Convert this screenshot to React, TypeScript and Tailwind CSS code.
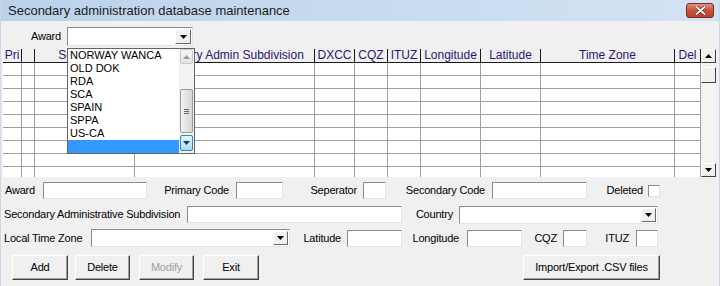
import React from 'react';

const columns = [
  { w: 'w-[19px]', label: 'Pri' },
  { w: 'w-[13px]', label: '' },
  { w: 'w-[100px]', label: 'Sec Code' },
  { w: 'w-[180px]', label: 'Secondary Admin Subdivision' },
  { w: 'w-[40px]', label: 'DXCC' },
  { w: 'w-[33px]', label: 'CQZ' },
  { w: 'w-[33px]', label: 'ITUZ' },
  { w: 'w-[60px]', label: 'Longitude' },
  { w: 'w-[60px]', label: 'Latitude' },
  { w: 'w-[134px]', label: 'Time Zone' },
  { w: 'w-[26px]', label: 'Del' },
];

const awards = ['NORWAY WANCA', 'OLD DOK', 'RDA', 'SCA', 'SPAIN', 'SPPA', 'US-CA', ''];

const DownTri = ({ color = '#000' }: { color?: string }) => (
  <svg width="7" height="4" viewBox="0 0 7 4">
    <path d="M0 0h7L3.5 4z" fill={color} />
  </svg>
);

const UpTri = ({ color = '#000' }: { color?: string }) => (
  <svg width="7" height="4" viewBox="0 0 7 4">
    <path d="M0 4h7L3.5 0z" fill={color} />
  </svg>
);

const Field = ({ className = '' }: { className?: string }) => (
  <div
    className={`h-[17px] shrink-0 bg-white border border-t-[#8c8c8c] border-l-[#8c8c8c] border-r-[#e3e3e3] border-b-[#e3e3e3] ${className}`}
  />
);

const Combo = ({ className = '' }: { className?: string }) => (
  <div
    className={`h-[18px] shrink-0 bg-white border border-t-[#8c8c8c] border-l-[#8c8c8c] border-r-[#e3e3e3] border-b-[#e3e3e3] flex justify-end p-px ${className}`}
  >
    <div className="w-[15px] h-full bg-[#f0f0f0] border border-t-white border-l-white border-r-[#696969] border-b-[#696969] flex items-center justify-center">
      <DownTri />
    </div>
  </div>
);

const Btn = ({ children, className = '', disabled = false }: { children: React.ReactNode; className?: string; disabled?: boolean }) => (
  <button
    className={`h-[25px] shrink-0 bg-[#f0f0f0] border border-t-white border-l-white border-r-[#404040] border-b-[#404040] shadow-[inset_-1px_-1px_0_#a0a0a0] text-[11px] tracking-[-0.2px] ${disabled ? 'text-[#a0a0a0]' : 'text-black'} ${className}`}
  >
    {children}
  </button>
);

export default function App() {
  return (
    <div className="w-[720px] h-[286px] overflow-hidden bg-[#f0f0f0] border-l border-r border-[#c4d8ee] font-['Liberation_Sans',Arial,sans-serif] text-black">
      {/* title bar */}
      <div className="h-[21px] -mx-px flex items-center pl-2 pr-[6px] bg-gradient-to-r from-[#bcd2ea] to-[#d3e3f4]">
        <span className="text-[13px] text-[#1c1c1c]">Secondary administration database maintenance</span>
        <div className="ml-auto mt-[-1px] w-[28px] h-[15px] rounded-[3px] border border-[#7b2b22] bg-gradient-to-b from-[#e0907f] via-[#c9503d] to-[#b8402d] flex items-center justify-center">
          <svg width="11" height="9" viewBox="0 0 11 9">
            <path d="M1 0.5l9 8M10 0.5l-9 8" stroke="#5a1a12" strokeWidth="3" />
            <path d="M1 0.5l9 8M10 0.5l-9 8" stroke="#fff" strokeWidth="1.8" />
          </svg>
        </div>
      </div>

      {/* award combo */}
      <div className="flex items-center pt-[6px] text-[11px] tracking-[-0.2px]">
        <span className="w-[60px] text-right shrink-0">Award</span>
        <div className="relative ml-[6px]">
          <div className="w-[126px] h-[19px] bg-white border border-t-[#8c8c8c] border-l-[#8c8c8c] border-r-[#e3e3e3] border-b-[#e3e3e3] flex justify-end p-px">
            <div className="w-[16px] h-full bg-[#f0f0f0] border border-t-white border-l-white border-r-[#696969] border-b-[#696969] flex items-center justify-center">
              <DownTri />
            </div>
          </div>
          {/* open dropdown list */}
          <div className="absolute left-0 top-[21px] z-10 w-[128px] bg-white border border-[#646464] flex text-[11px] tracking-normal">
            <div className="w-[111px]">
              {awards.map((a, i) => (
                <div
                  key={i}
                  className={`h-[13px] leading-[13px] pl-[2px] ${i === awards.length - 1 ? 'bg-[#3399ff]' : ''}`}
                >
                  {a}
                </div>
              ))}
            </div>
            <div className="w-[15px] h-[104px] bg-[#f2f2f2] flex flex-col">
              <div className="h-[15px] mx-px rounded-[2px] border border-[#c8c8c8] bg-gradient-to-b from-[#f7f7f7] to-[#e4e4e4] flex items-center justify-center">
                <UpTri color="#9a9a9a" />
              </div>
              <div className="h-[44px] mt-[25px] mx-px rounded-[2px] border border-[#9a9a9a] bg-gradient-to-r from-[#f2f2f2] to-[#d6d6d6] flex flex-col items-center justify-center gap-px">
                <div className="w-[5px] h-px bg-[#666]" />
                <div className="w-[5px] h-px bg-[#666]" />
                <div className="w-[5px] h-px bg-[#666]" />
              </div>
              <div className="h-[16px] mt-[2px] mx-px rounded-[2px] border border-[#3c7fb1] bg-gradient-to-b from-[#e3f4fc] to-[#a9dbf6] flex items-center justify-center">
                <DownTri color="#1e3a58" />
              </div>
            </div>
          </div>
        </div>
      </div>

      {/* grid */}
      <div className="ml-[2px] mt-[3px] h-[128px] flex overflow-hidden">
        <div className="w-[698px] flex flex-col">
          <div className="flex h-[14px] shrink-0">
            {columns.map((c, i) => (
              <div
                key={i}
                className={`${c.w} shrink-0 h-[14px] border-r border-b border-[#1a1a1a] text-[12px] leading-[13px] text-[#2c1676] text-center whitespace-nowrap overflow-hidden`}
              >
                {c.label}
              </div>
            ))}
          </div>
          {Array.from({ length: 9 }).map((_, r) => (
            <div key={r} className="flex h-[13px] shrink-0 bg-white">
              {columns.map((c, i) => (
                <div key={i} className={`${c.w} shrink-0 h-[13px] border-r border-b border-[#a0a0a0]`} />
              ))}
            </div>
          ))}
        </div>
        <div className="w-[15px] h-[128px] bg-[#f4f4f4] flex flex-col">
          <div className="h-[14px] bg-[#f0f0f0] border border-t-white border-l-white border-r-[#404040] border-b-[#404040] flex items-center justify-center">
            <UpTri />
          </div>
          <div className="h-[16px] mt-[4px] bg-[#f0f0f0] border border-t-white border-l-white border-r-[#404040] border-b-[#404040]" />
          <div className="h-[14px] mt-auto bg-[#f0f0f0] border border-t-white border-l-white border-r-[#404040] border-b-[#404040] flex items-center justify-center">
            <DownTri />
          </div>
        </div>
      </div>

      {/* edit fields */}
      <div className="text-[11px] tracking-[-0.2px]">
        <div className="flex items-center mt-[5px] h-[17px]">
          <span className="w-[42px] pl-[4px] shrink-0">Award</span>
          <Field className="w-[104px]" />
          <span className="w-[82px] text-right shrink-0">Primary Code</span>
          <Field className="ml-[7px] w-[47px]" />
          <span className="w-[74px] text-right shrink-0">Seperator</span>
          <Field className="ml-[6px] w-[23px]" />
          <span className="w-[99px] text-right shrink-0">Secondary Code</span>
          <Field className="ml-[7px] w-[95px]" />
          <span className="w-[56px] text-right shrink-0">Deleted</span>
          <div className="ml-[5px] w-[12px] h-[12px] bg-white border border-t-[#8c8c8c] border-l-[#8c8c8c] border-r-[#e3e3e3] border-b-[#e3e3e3]" />
        </div>

        <div className="flex items-center mt-[7px] h-[17px]">
          <span className="w-[186px] pl-[3px] shrink-0">Secondary Administrative Subdivision</span>
          <Field className="w-[215px]" />
          <span className="w-[51px] text-right shrink-0">Country</span>
          <Combo className="ml-[6px] w-[199px]" />
        </div>

        <div className="flex items-center mt-[6px] h-[18px]">
          <span className="w-[90px] pl-[3px] shrink-0">Local Time Zone</span>
          <Combo className="w-[199px]" />
          <span className="w-[51px] text-right shrink-0">Latitude</span>
          <Field className="ml-[6px] w-[55px]" />
          <span className="w-[57px] text-right shrink-0">Longitude</span>
          <Field className="ml-[8px] w-[55px]" />
          <span className="w-[35px] text-right shrink-0">CQZ</span>
          <Field className="ml-[6px] w-[24px]" />
          <span className="w-[42px] text-right shrink-0">ITUZ</span>
          <Field className="ml-[7px] w-[22px]" />
        </div>

        <div className="flex items-center mt-[8px]">
          <Btn className="ml-[11px] w-[56px]">Add</Btn>
          <Btn className="ml-[7px] w-[55px]">Delete</Btn>
          <Btn className="ml-[9px] w-[55px]" disabled>
            Modify
          </Btn>
          <Btn className="ml-[9px] w-[56px]">Exit</Btn>
          <Btn className="ml-[264px] w-[137px]">Import/Export .CSV files</Btn>
        </div>
      </div>
    </div>
  );
}
